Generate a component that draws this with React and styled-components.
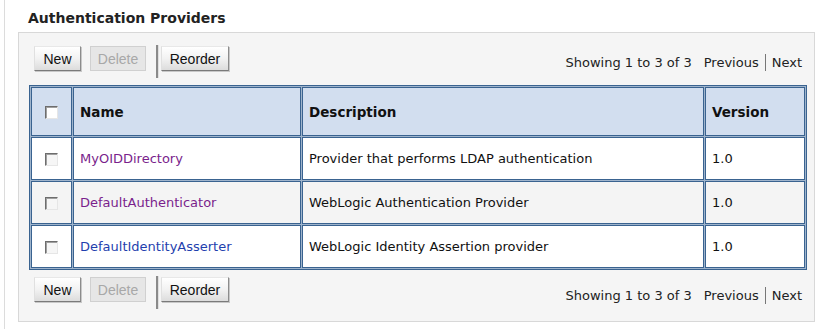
import React from "react";
import styled, { createGlobalStyle } from "styled-components";

const GlobalStyle = createGlobalStyle`
    html, body {
        margin: 0;
        padding: 0;
        background: #ffffff;
    }
    body {
        font-family: "DejaVu Sans", Verdana, sans-serif;
        color: #000;
    }
`;

const Page = styled.div`
    margin-left: 4px;
    border-left: 1px solid #dcdcdc;
    padding-left: 13px;
    min-height: 329px;
    box-sizing: border-box;
    width: 798px;
`;

const Title = styled.h2`
    margin: 0;
    padding: 10px 0 0 10px;
    height: 22px;
    font-size: 14px;
    font-weight: bold;
    color: #222;
    line-height: 17px;
`;

const Panel = styled.section`
    width: 797px;
    height: 290px;
    box-sizing: border-box;
    border: 1px solid #d8d8d8;
    background: #f5f5f5;
    padding: 12px 9px 0 10px;
`;

const Toolbar = styled.div`
    display: flex;
    align-items: flex-start;
    justify-content: space-between;
    height: ${p => p.$height}px;
    padding-left: 5px;
    padding-top: ${p => p.$top || 0}px;
`;

const Buttons = styled.div`
    display: flex;
    align-items: flex-start;
    gap: 9px;
`;

const Button = styled.button`
    width: ${p => p.$w}px;
    height: 25px;
    padding: 0;
    font-family: "Liberation Sans", Arial, sans-serif;
    font-size: 14px;
    color: ${p => (p.disabled ? "#a8a8a8" : "#111")};
    background: ${p =>
        p.disabled
            ? "#e6e6e6"
            : "linear-gradient(#ffffff 0%, #f2f2f2 50%, #dcdcdc 100%)"};
    border: 1px solid;
    border-color: ${p =>
        p.disabled ? "#d0d0d0" : "#e8e8e8 #8c8c8c #7a7a7a #e0e0e0"};
    box-shadow: ${p => (p.disabled ? "none" : "1px 1px 0 #c8c8c8")};
    cursor: default;
`;

const Separator = styled.span`
    width: 2px;
    height: 33px;
    margin: -1px -7px 0 1px;
    background: #8a8a8a;
    border-right: 1px solid #e0e0e0;
`;

const Paging = styled.div`
    display: flex;
    align-items: center;
    gap: 6px;
    font-size: 13px;
    color: #222;
    padding-top: ${p => p.$top}px;
    padding-right: 3px;
`;

const PageLink = styled.span`
    color: #222;
`;

const Bar = styled.span`
    width: 1px;
    height: 17px;
    background: #777;
`;

const Table = styled.table`
    width: 778px;
    border-collapse: separate;
    border-spacing: 1px;
    background: #9fb4cc;
    border: 1px solid #3a6390;
    font-size: 13px;
    table-layout: fixed;
`;

const Th = styled.th`
    height: 47px;
    padding: 0 6px;
    text-align: ${p => (p.$center ? "center" : "left")};
    font-weight: bold;
    font-size: 13.5px;
    background: #d2deef;
    border: 1px solid #3a6390;
    color: #111;
`;

const Td = styled.td`
    height: 41px;
    padding: 0 6px;
    text-align: ${p => (p.$center ? "center" : "left")};
    background: ${p => (p.$alt ? "#f4f4f4" : "#ffffff")};
    border: 1px solid #3a6390;
    color: #111;
    white-space: nowrap;
`;

const Check = styled.span`
    display: inline-block;
    vertical-align: middle;
    width: 11px;
    height: 11px;
    border: 1px solid;
    border-color: #6d6d6d #e6e6e6 #e6e6e6 #6d6d6d;
    box-shadow: inset 1px 1px 0 #a0a0a0;
    background: ${p => (p.$header ? "#ffffff" : "#f6f6f6")};
`;

const NameLink = styled.a`
    color: ${p => (p.$visited ? "#7a1f8c" : "#1f3fae")};
    text-decoration: none;
`;

const rows = [
    { name: "MyOIDDirectory", visited: true, desc: "Provider that performs LDAP authentication", version: "1.0" },
    { name: "DefaultAuthenticator", visited: true, desc: "WebLogic Authentication Provider", version: "1.0" },
    { name: "DefaultIdentityAsserter", visited: false, desc: "WebLogic Identity Assertion provider", version: "1.0" },
];

const ActionBar = ({ height, top, pagingTop }) => (
    <Toolbar $height={height} $top={top}>
        <Buttons>
            <Button $w={47}>New</Button>
            <Button $w={56} disabled>Delete</Button>
            <Separator />
            <Button $w={68}>Reorder</Button>
        </Buttons>
        <Paging $top={pagingTop}>
            <span>Showing 1 to 3 of 3</span>
            <span />
            <PageLink>Previous</PageLink>
            <Bar />
            <PageLink>Next</PageLink>
        </Paging>
    </Toolbar>
);

export default function App() {
    return (
        <>
            <GlobalStyle />
            <Page>
                <Title>Authentication Providers</Title>
                <Panel>
                    <ActionBar height={39} top={1} pagingTop={8} />
                    <Table>
                        <colgroup>
                            <col style={{ width: 41 }} />
                            <col style={{ width: 228 }} />
                            <col style={{ width: 402 }} />
                            <col />
                        </colgroup>
                        <thead>
                            <tr>
                                <Th $center><Check $header /></Th>
                                <Th>Name</Th>
                                <Th>Description</Th>
                                <Th>Version</Th>
                            </tr>
                        </thead>
                        <tbody>
                            {rows.map((r, i) => (
                                <tr key={r.name}>
                                    <Td $center $alt={i === 1}><Check /></Td>
                                    <Td $alt={i === 1}>
                                        <NameLink href="#" $visited={r.visited}>{r.name}</NameLink>
                                    </Td>
                                    <Td $alt={i === 1}>{r.desc}</Td>
                                    <Td $alt={i === 1}>{r.version}</Td>
                                </tr>
                            ))}
                        </tbody>
                    </Table>
                    <ActionBar height={38} top={7} pagingTop={10} />
                </Panel>
            </Page>
        </>
    );
}
